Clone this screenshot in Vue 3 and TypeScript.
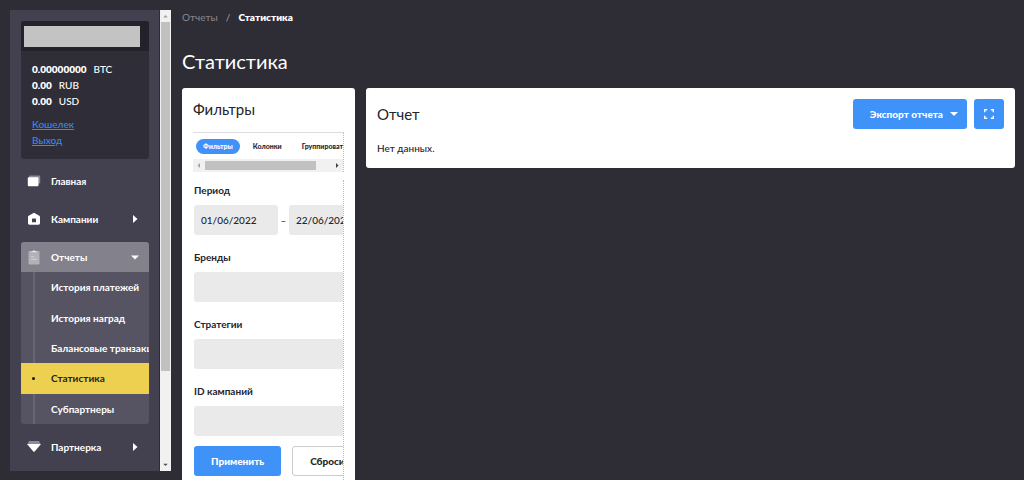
<script setup lang="ts">
import { ref } from 'vue'

interface Balance {
  amount: string
  currency: string
}

const balances: Balance[] = [
  { amount: '0.00000000', currency: 'BTC' },
  { amount: '0.00', currency: 'RUB' },
  { amount: '0.00', currency: 'USD' },
]

const reportPages: string[] = [
  'История платежей',
  'История наград',
  'Балансовые транзакции',
  'Статистика',
  'Субпартнеры',
]
const activePage = ref('Статистика')

const tabs: string[] = ['Фильтры', 'Колонки', 'Группировать']
const activeTab = ref('Фильтры')

const dateFrom = ref('01/06/2022')
const dateTo = ref('22/06/2022')

const fields = ref([
  { id: 'brands', label: 'Бренды', value: '' },
  { id: 'strategies', label: 'Стратегии', value: '' },
  { id: 'campaigns', label: 'ID кампаний', value: '' },
])
</script>

<template>
  <div class="page">
    <aside class="sidebar">
      <div class="side-panel">
        <section class="user-card">
          <div class="user-head"><div class="user-name"></div></div>
          <div class="user-body">
            <p v-for="b in balances" :key="b.currency" class="balance">
              <b>{{ b.amount }}</b><span>{{ b.currency }}</span>
            </p>
            <div class="user-links">
              <a href="#wallet">Кошелек</a>
              <a href="#logout">Выход</a>
            </div>
          </div>
        </section>

        <nav class="nav">
          <a href="#home" class="nav-item">
            <svg class="nav-icon" viewBox="0 0 14 14">
              <path d="M3 1.500h9a1.200 1.200 0 0 1 1.200 1.200v6.800h-2V4H2V2.500a1 1 0 0 1 1-1z" fill="#8b8a97" />
              <rect x="0.800" y="3.300" width="10.700" height="8.900" rx="1" fill="#fff" />
            </svg>
            <span>Главная</span>
          </a>
          <a href="#campaigns" class="nav-item">
            <svg class="nav-icon" viewBox="0 0 14 14">
              <path d="M7 .7 12.300 3.800a1.400 1.400 0 0 1 .7 1.200v6.300a1.400 1.400 0 0 1-1.400 1.400H2.400A1.400 1.400 0 0 1 1 11.300V5a1.400 1.400 0 0 1 .7-1.200z" fill="#fff" />
              <rect x="5" y="6.500" width="4" height="3.700" rx="0.500" fill="#434150" />
            </svg>
            <span>Кампании</span>
            <svg class="arrow" viewBox="0 0 10 10"><path d="M3 1v8l4.500-4z" fill="#fff" /></svg>
          </a>
          <div class="nav-group">
            <a href="#reports" class="nav-item open">
              <svg class="nav-icon tall" viewBox="0 0 14 16">
                <rect x="1.500" y="2" width="11" height="13.500" rx="1" fill="#b2b1b7" />
                <path d="M4.500 3.200V2h1.300a1.300 1.300 0 0 1 2.400 0h1.300v1.200z" fill="#e3e3e6" />
                <path d="M4 7.700h3M4 10.300h6" stroke="#d2d1d5" />
              </svg>
              <span>Отчеты</span>
              <svg class="arrow" viewBox="0 0 10 10"><path d="M1 3.500h8L5 7.500z" fill="#fff" /></svg>
            </a>
            <div class="subnav">
              <a
                v-for="p in reportPages"
                :key="p"
                href="#reports"
                class="sub-item"
                :class="{ active: p === activePage }"
                @click.prevent="activePage = p"
              >{{ p }}</a>
            </div>
          </div>
          <a href="#partner" class="nav-item">
            <svg class="nav-icon" viewBox="0 0 14 14">
              <path d="M2 1h10l1.500 3H.5z" fill="#8b8a97" />
              <path d="M0 4h14l-6.300 7.500a1 1 0 0 1-1.400 0z" fill="#fff" />
            </svg>
            <span>Партнерка</span>
            <svg class="arrow" viewBox="0 0 10 10"><path d="M3 1v8l4.500-4z" fill="#fff" /></svg>
          </a>
        </nav>
      </div>
      <div class="vbar" aria-hidden="true">
        <svg viewBox="0 0 12 12"><path d="M3.500 7.500h5L6 5z" fill="#a3a3a3" /></svg>
        <div class="vthumb"></div>
        <svg viewBox="0 0 12 12"><path d="M3.500 4.500h5L6 7z" fill="#505050" /></svg>
      </div>
    </aside>

    <main class="main">
      <div class="crumbs">
        <a href="#reports">Отчеты</a><span class="slash">/</span><b>Статистика</b>
      </div>
      <h1>Статистика</h1>

      <div class="columns">
        <section class="card filters">
          <h2>Фильтры</h2>
          <div class="tabs-wrap">
            <div class="tabs">
              <button
                v-for="t in tabs"
                :key="t"
                type="button"
                class="tab"
                :class="{ active: t === activeTab }"
                @click="activeTab = t"
              >{{ t }}</button>
            </div>
            <div class="hbar" aria-hidden="true">
              <svg viewBox="0 0 12 12"><path d="M7 3.500v5L4.500 6z" fill="#a3a3a3" /></svg>
              <div class="hthumb"></div>
              <svg viewBox="0 0 12 12"><path d="M5 3.500v5L7.500 6z" fill="#404040" /></svg>
            </div>
          </div>

          <form class="form" @submit.prevent>
            <div class="fields">
              <div class="field">
                <label for="date-from">Период</label>
                <div class="period">
                  <input id="date-from" v-model="dateFrom" type="text" />
                  <span>–</span>
                  <input v-model="dateTo" type="text" aria-label="Период, конец" />
                </div>
              </div>
              <div v-for="f in fields" :key="f.id" class="field">
                <label :for="f.id">{{ f.label }}</label>
                <input :id="f.id" v-model="f.value" type="text" />
              </div>
            </div>
            <div class="actions">
              <button type="submit" class="btn primary">Применить</button>
              <button type="reset" class="btn plain">Сбросить</button>
            </div>
          </form>
        </section>

        <section class="card report">
          <header>
            <h2>Отчет</h2>
            <div class="tools">
              <button type="button" class="btn primary export">
                Экспорт отчета
                <svg viewBox="0 0 8 8"><path d="M0 2h8L4 6z" fill="#fff" /></svg>
              </button>
              <button type="button" class="btn primary full" aria-label="На весь экран">
                <svg viewBox="0 0 10 10" fill="none" stroke="#fff" stroke-width="1.400">
                  <path d="M.7 3.200V.7h2.500M6.800.7h2.500v2.500M9.300 6.800v2.500H6.800M3.200 9.300H.7V6.800" />
                </svg>
              </button>
            </div>
          </header>
          <p>Нет данных.</p>
        </section>
      </div>
    </main>
  </div>
</template>

<style>
html,
body {
  background: #2e2c35;
}
</style>

<style scoped>
* {
  box-sizing: border-box;
}
.page {
  display: flex;
  gap: 11px;
  height: 100vh;
  padding: 10px 9px 0 10px;
  overflow: hidden;
  background: #2e2c35;
  color: #fff;
  font: 10px/16px Lato, "Open Sans", sans-serif;
}
button,
input {
  font: inherit;
}
button {
  cursor: pointer;
}
p,
h1,
h2 {
  margin: 0;
  font-weight: 400;
}

/* Sidebar */
.sidebar {
  display: flex;
  flex: none;
  width: 161px;
  margin-bottom: 9px;
}
.side-panel {
  flex: 1;
  min-width: 0;
  padding: 11px 10px 0 11px;
  overflow: hidden;
  background: #434150;
}
.user-card {
  border-radius: 3px;
  overflow: hidden;
  background: #2f2e38;
}
.user-head {
  height: 30px;
  padding: 5px 9px 4px 3px;
  background: #22222a;
}
.user-name {
  height: 21px;
  background: #c3c3c3;
}
.user-body {
  padding: 10px 11px 11px;
}
.balance {
  font-weight: 500;
}
.balance b {
  margin-right: 7px;
  font-weight: 800;
}
.user-links {
  display: flex;
  flex-direction: column;
  align-items: flex-start;
  margin-top: 7px;
}
.user-links a {
  color: #3f87e6;
  font-weight: 500;
}
.nav {
  display: flex;
  flex-direction: column;
  gap: 8px;
  margin-top: 7px;
}
.nav-item {
  display: flex;
  align-items: center;
  height: 30px;
  padding: 0 9px 0 6px;
  border-radius: 3px;
  color: #fff;
  font-weight: 700;
  text-decoration: none;
}
.nav-item.open {
  border-radius: 3px 3px 0 0;
  background: #83818b;
}
.nav-icon {
  width: 14px;
  height: 14px;
  margin-right: 10px;
}
.nav-icon.tall {
  height: 16px;
}
.arrow {
  width: 10px;
  height: 10px;
  margin-left: auto;
}
.subnav {
  position: relative;
  display: grid;
  grid-template-rows: repeat(5, 1fr);
  height: 152px;
  border-radius: 0 0 3px 3px;
  overflow: hidden;
  background: #565462;
}
.subnav::before {
  content: "";
  position: absolute;
  top: 0;
  bottom: 0;
  left: 12px;
  width: 2px;
  background: #686674;
}
.sub-item {
  position: relative;
  display: flex;
  align-items: center;
  padding-left: 30px;
  color: #fff;
  font-weight: 700;
  text-decoration: none;
  white-space: nowrap;
}
.sub-item.active {
  background: #eed051;
  color: #26231a;
}
.sub-item.active::before {
  content: "";
  position: absolute;
  left: 11px;
  width: 3px;
  height: 3px;
  border-radius: 50%;
  background: #1c1a12;
}
.vbar {
  display: flex;
  flex-direction: column;
  width: 12px;
  border-left: 1px solid #2e2c35;
  background: #f1f1f1;
}
.vbar svg {
  width: 11px;
  height: 12px;
}
.vthumb {
  flex: 0 1 349px;
  margin: 0 1px auto;
  background: #c1c1c1;
}

/* Main area */
.main {
  flex: 1;
  min-width: 0;
}
.crumbs {
  height: 14px;
  line-height: 14px;
}
.crumbs a {
  color: #83818b;
  font-weight: 500;
  text-decoration: none;
}
.crumbs b {
  font-weight: 800;
}
.slash {
  margin: 0 8px;
  color: #a2a1a8;
}
h1 {
  margin-top: 22px;
  font-size: 20px;
  line-height: 30px;
}
.columns {
  display: grid;
  grid-template-columns: 173px 1fr;
  align-items: start;
  gap: 11px;
  margin-top: 12px;
}
.card {
  min-width: 0;
  padding: 11px;
  border-radius: 3px;
  background: #fff;
  color: #25242b;
}
h2 {
  font-size: 15px;
  line-height: 20px;
}
.tabs-wrap {
  margin-top: 13px;
  border-top: 1px solid #ddd;
  border-right: 1px dotted #bbb;
  overflow: hidden;
}
.tabs {
  display: flex;
  gap: 6px;
  padding: 6px 3px 5px;
}
.tab {
  flex: none;
  height: 15px;
  padding: 0 7px;
  border: 0;
  border-radius: 8px;
  background: none;
  color: #25242b;
  font-size: 7px;
  font-weight: 900;
  line-height: 15px;
}
.tab.active {
  background: #3f92f8;
  color: #fff;
}
.hbar {
  display: flex;
  height: 13px;
  background: #f1f1f1;
}
.hbar svg {
  width: 12px;
  height: 13px;
}
.hthumb {
  width: 111px;
  margin: 2px auto 2px 0;
  background: #c1c1c1;
}
.form {
  margin-top: 8px;
  padding: 0 0 12px 1px;
  border-right: 1px dotted #bbb;
  overflow: hidden;
}
.fields {
  display: flex;
  flex-direction: column;
  gap: 12px;
}
.field {
  display: flex;
  flex-direction: column;
  gap: 5px;
  width: 179px;
}
.field label {
  font-weight: 700;
  line-height: 20px;
}
.field input {
  min-width: 0;
  height: 30px;
  padding: 0 7px;
  border: 0;
  border-radius: 3px;
  background: #eaeaea;
  color: #25242b;
  font-weight: 500;
}
.period {
  display: flex;
  align-items: center;
  justify-content: space-between;
}
.period input {
  width: 84px;
}
.actions {
  display: flex;
  gap: 11px;
  margin-top: 10px;
}
.btn {
  flex: none;
  height: 30px;
  padding: 0 17px;
  border: 0;
  border-radius: 3px;
  font-weight: 900;
}
.primary {
  background: #3f92f8;
  color: #fff;
}
.plain {
  border: 1px solid #ccc;
  background: #fff;
  color: #25242b;
}
.report header {
  display: flex;
  justify-content: space-between;
}
.report h2 {
  margin-top: 5px;
}
.tools {
  display: flex;
  gap: 7px;
}
.export {
  display: flex;
  align-items: center;
  gap: 7px;
  padding-right: 9px;
}
.export svg {
  width: 8px;
  height: 8px;
}
.full {
  display: flex;
  align-items: center;
  padding: 0 10px;
}
.full svg {
  width: 10px;
  height: 10px;
}
.report p {
  margin: 11px 0 1px;
  font-weight: 500;
}
</style>
